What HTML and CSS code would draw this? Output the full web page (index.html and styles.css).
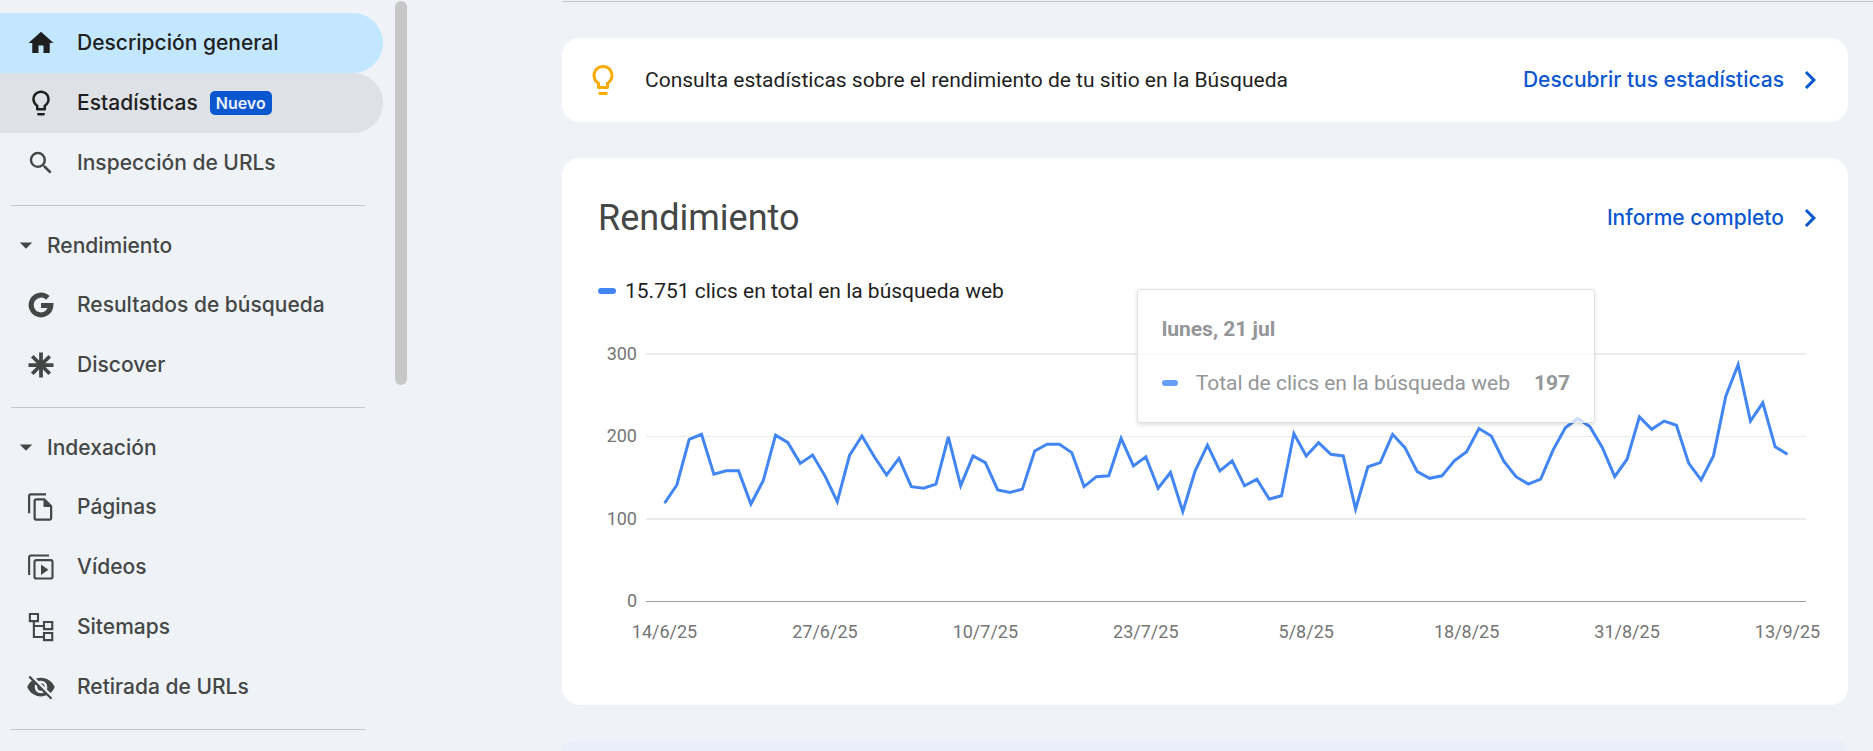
FILE: index.html
```html
<!DOCTYPE html>
<html lang="es">

<head>
    <meta charset="UTF-8">
    <meta name="viewport" content="width=device-width, initial-scale=1.0">
    <title>Descripción general</title>
    <link rel="stylesheet" href="styles.css">
</head>
<body>
    <div class="sidebar">
        <nav class="menu">
            <a class="item active" href="#">
                <svg class="icon" viewBox="0 0 24 24"><path d="M10 20v-6h4v6h5v-8h3L12 3 2 12h3v8z"/></svg>
                Descripción general
            </a>
            <a class="item hover" href="#">
                <svg class="icon" viewBox="0 0 24 24"><path d="M9 21c0 .55.45 1 1 1h4c.55 0 1-.45 1-1v-1H9v1zm3-19C8.14 2 5 5.14 5 9c0 2.38 1.19 4.47 3 5.74V17c0 .55.45 1 1 1h6c.55 0 1-.45 1-1v-2.26c1.81-1.27 3-3.36 3-5.74 0-3.86-3.14-7-7-7zm2.85 11.1l-.85.6V16h-4v-2.3l-.85-.6A4.997 4.997 0 0 1 7 9c0-2.76 2.24-5 5-5s5 2.24 5 5c0 1.63-.8 3.16-2.15 4.1z"/></svg>
                Estadísticas
                <span class="badge">Nuevo</span>
            </a>
            <a class="item" href="#">
                <svg class="icon" viewBox="0 0 24 24"><path d="M15.5 14h-.79l-.28-.27A6.471 6.471 0 0 0 16 9.5 6.5 6.5 0 1 0 9.5 16c1.61 0 3.09-.59 4.23-1.57l.27.28v.79l5 4.99L20.49 19l-4.99-5zm-6 0C7.01 14 5 11.99 5 9.5S7.01 5 9.5 5 14 7.01 14 9.5 11.99 14 9.5 14z"/></svg>
                Inspección de URLs
            </a>
            <hr class="divider">
            <button class="section" type="button">
                <svg class="icon" viewBox="0 0 24 24"><path d="M7 10l5 5 5-5z"/></svg>
                Rendimiento
            </button>
            <a class="item" href="#">
                <svg class="icon" viewBox="0 0 24 24"><path d="M17.5 6.3A7.9 7.9 0 1 0 19.9 12.3H12" fill="none" stroke="currentColor" stroke-width="4"/></svg>
                Resultados de búsqueda
            </a>
            <a class="item" href="#">
                <svg class="icon" viewBox="0 0 24 24"><path d="M12 2v20M2 12h20M5 5l14 14M19 5L5 19" fill="none" stroke="currentColor" stroke-width="3"/></svg>
                Discover
            </a>
            <hr class="divider">
            <button class="section" type="button">
                <svg class="icon" viewBox="0 0 24 24"><path d="M7 10l5 5 5-5z"/></svg>
                Indexación
            </button>
            <a class="item" href="#">
                <svg class="icon" viewBox="0 0 24 24"><path d="M16 1H3.600c-1.100 0-2 .9-2 2v14h1.800V2.800H16V1zM15 5H8c-1.100 0-1.990.9-1.990 2L6 21c0 1.100.89 2 1.990 2H19c1.100 0 2-.9 2-2V11l-6-6zM7.800 21.200V6.800H14V12h5.200v9.200z"/></svg>
                Páginas
            </a>
            <a class="item" href="#">
                <svg class="icon" viewBox="0 0 24 24"><path d="M2.500 18.400V4.300q0-1.500 1.500-1.500h14.400M8.300 6.500h11.400q1.500 0 1.500 1.500v11.700q0 1.500-1.500 1.500H8.300q-1.500 0-1.500-1.500V8q0-1.500 1.500-1.500z" fill="none" stroke="currentColor" stroke-width="1.700"/><path d="M12 9.900v8.400l6-4.200z"/></svg>
                Vídeos
            </a>
            <a class="item" href="#">
                <svg class="icon" viewBox="0 0 24 24"><path d="M3.100 1.600h6.500v5.700H3.100zM14.400 8h6.600v5.700h-6.600zM14.400 16.800h6.600v5.700h-6.600zM6.300 7.300V20h8.100M6.300 11.200h8.100" fill="none" stroke="currentColor" stroke-width="1.700"/></svg>
                Sitemaps
            </a>
            <a class="item" href="#">
                <svg class="icon" viewBox="0 0 24 24"><path d="M12 7c2.760 0 5 2.240 5 5 0 .65-.13 1.260-.36 1.830l2.920 2.920c1.510-1.260 2.700-2.890 3.430-4.750-1.730-4.390-6-7.500-11-7.500-1.400 0-2.740.25-3.980.7l2.160 2.160C10.740 7.130 11.350 7 12 7zM2 4.270l2.280 2.280.46.46C3.080 8.300 1.780 10.020 1 12c1.730 4.390 6 7.500 11 7.500 1.550 0 3.030-.3 4.380-.84l.42.42L19.730 22 21 20.730 3.270 3 2 4.270zM7.530 9.800l1.550 1.550c-.05.21-.08.43-.08.65 0 1.660 1.340 3 3 3 .22 0 .44-.03.65-.08l1.550 1.550c-.67.33-1.410.53-2.200.53-2.760 0-5-2.240-5-5 0-.79.2-1.530.53-2.200zm4.310-.78l3.150 3.150.02-.16c0-1.660-1.340-3-3-3l-.17.01z"/></svg>
                Retirada de URLs
            </a>
            <hr class="divider">
        </nav>
        <div class="scroll-thumb"></div>
    </div>

    <main class="main">
        <div class="card tip">
            <svg class="icon-big bulb" viewBox="0 0 24 24"><path d="M9 21c0 .55.45 1 1 1h4c.55 0 1-.45 1-1v-1H9v1zm3-19C8.14 2 5 5.14 5 9c0 2.38 1.19 4.47 3 5.74V17c0 .55.45 1 1 1h6c.55 0 1-.45 1-1v-2.26c1.81-1.27 3-3.36 3-5.74 0-3.86-3.14-7-7-7zm2.85 11.1l-.85.6V16h-4v-2.3l-.85-.6A4.997 4.997 0 0 1 7 9c0-2.76 2.24-5 5-5s5 2.24 5 5c0 1.63-.8 3.16-2.15 4.1z"/></svg>
            <span class="tip-text">Consulta estadísticas sobre el rendimiento de tu sitio en la Búsqueda</span>
            <a class="more" href="#">
                Descubrir tus estadísticas
                <svg class="icon-big" viewBox="0 0 24 24"><path d="M10 6L8.590 7.410 13.170 12l-4.580 4.590L10 18l6-6z"/></svg>
            </a>
        </div>

        <section class="card performance">
            <div class="card-header">
                <h1 class="title">Rendimiento</h1>
                <a class="more" href="#">
                    Informe completo
                    <svg class="icon-big" viewBox="0 0 24 24"><path d="M10 6L8.590 7.410 13.170 12l-4.580 4.590L10 18l6-6z"/></svg>
                </a>
            </div>
            <div class="legend">
                <span class="marker"></span>
                15.751 clics en total en la búsqueda web
            </div>
            <div class="chart">
                <div class="y-axis">
                    <span>300</span>
                    <span>200</span>
                    <span>100</span>
                    <span>0</span>
                </div>
                <div class="plot">
                    <div class="grid-lines">
                        <div></div>
                        <div></div>
                        <div></div>
                        <div></div>
                    </div>
                    <svg class="line" viewBox="0 0 94 300" preserveAspectRatio="none">
                        <polyline id="clicks" points=""/>
                    </svg>
                    <div class="tooltip">
                        <div class="tooltip-date">lunes, 21 jul</div>
                        <div class="tooltip-row">
                            <span class="marker"></span>
                            <span class="tooltip-label">Total de clics en la búsqueda web</span>
                            <b>197</b>
                        </div>
                    </div>
                </div>
                <div class="x-axis">
                    <div class="x-labels">
                        <span>14/6/25</span>
                        <span>27/6/25</span>
                        <span>10/7/25</span>
                        <span>23/7/25</span>
                        <span>5/8/25</span>
                        <span>18/8/25</span>
                        <span>31/8/25</span>
                        <span>13/9/25</span>
                    </div>
                </div>
            </div>
        </section>

        <section class="next-card"></section>
    </main>

    <script>
        // clics por día, del 14/6/25 al 13/9/25
        var clicks = [
            119, 141, 196, 202, 154, 158, 158, 118, 146, 201, 192, 167, 177,
            152, 121, 177, 200, 175, 153, 173, 139, 137, 142, 199, 140, 176,
            168, 135, 132, 136, 182, 190, 190, 180, 139, 151, 152, 197, 164,
            175, 137, 156, 109, 158, 189, 158, 170, 140, 148, 124, 128, 203,
            176, 192, 178, 176, 112, 163, 168, 202, 186, 157, 149, 152, 170,
            181, 209, 200, 170, 151, 142, 148, 183, 210, 221, 211, 186, 151,
            172, 223, 208, 218, 213, 167, 147, 176, 248, 286, 218, 240, 187,
            178
        ];
        var points = '';
        for (var i = 0; i < clicks.length; i++) {
            points += (i + 1.5) + ',' + (300 - clicks[i]) + ' ';
        }
        document.getElementById('clicks').setAttribute('points', points);
    </script>
</body>

</html>
```

FILE: styles.css
```css
* {
    box-sizing: border-box;
}

body {
    margin: 0;
    height: 100vh;
    display: flex;
    overflow: hidden;
    background-color: #eff3f8;
    color: #1f1f1f;
    font-family: Roboto, Arial, sans-serif;
    font-size: 21px;
    line-height: 30px;
}

a {
    text-decoration: none;
}

.icon {
    width: 30px;
    height: 30px;
    flex: none;
    fill: currentColor;
}

.icon-big {
    width: 36px;
    height: 36px;
    flex: none;
    fill: currentColor;
}

/* sidebar */
.sidebar {
    width: 410px;
    flex: none;
    display: flex;
    gap: 12px;
}

.menu {
    width: 383px;
    padding-top: 13px;
}

.item {
    display: flex;
    align-items: center;
    height: 60px;
    padding-left: 26px;
    border-radius: 0 30px 30px 0;
    color: #444746;
}

.item .icon {
    margin-right: 21px;
}

.item.active {
    background-color: #c2e7ff;
    color: #1f1f1f;
}

.item.hover {
    background-color: #dee1e6;
    color: #1f1f1f;
}

.item, .section, .more {
    font-family: Inter, Roboto, sans-serif;
    font-size: 21px;
    font-weight: 500;
}

.badge {
    margin-left: 12px;
    padding: 0 6px;
    border-radius: 5px;
    background-color: #0b57d0;
    color: #edf2fa;
    font-size: 16px;
    font-weight: 600;
    line-height: 24px;
}

.section {
    display: flex;
    align-items: center;
    gap: 6px;
    width: 100%;
    height: 60px;
    padding: 0 0 0 11px;
    border: none;
    background: none;
    color: #444746;
    cursor: pointer;
}

.divider {
    height: 1px;
    margin: 12px 18px 9px 11px;
    border: none;
    background-color: #c4c7c5;
}

.scroll-thumb {
    width: 12px;
    height: 384px;
    margin-top: 1px;
    border-radius: 6px;
    background-color: #c7c7c7;
}

/* main column */
.main {
    flex: 1;
    min-width: 0;
    margin: 1px 0 0 152px;
    border-top: 1px solid #c4c7c5;
    padding: 36px 25px 0 0;
    display: flex;
    flex-direction: column;
    gap: 36px;
}

.card {
    flex: none;
    border-radius: 18px;
    background-color: #fff;
}

.tip {
    display: flex;
    align-items: center;
    gap: 24px;
    padding: 24px 20px 24px 23px;
}

.bulb {
    color: #f9ab00;
}

.tip-text {
    flex: 1;
}

.more {
    display: flex;
    align-items: center;
    gap: 8px;
    color: #0b57d0;
}

.performance {
    padding: 36px 0 58px 36px;
}

.card-header {
    display: flex;
    align-items: center;
    justify-content: space-between;
    height: 48px;
    padding-right: 20px;
}

.title {
    margin: 0;
    color: #444746;
    font-size: 36px;
    font-weight: 400;
}

.legend {
    display: flex;
    align-items: center;
    gap: 9px;
    margin-top: 34px;
}

.marker {
    width: 18px;
    height: 6px;
    flex: none;
    border-radius: 3px;
    background-color: #4285f4;
}

/* chart */
.chart {
    display: grid;
    grid-template-columns: 39px 1fr;
    column-gap: 9px;
    margin: 47px 42px 0 0;
    color: #757575;
    font-size: 18px;
}

.y-axis {
    display: flex;
    flex-direction: column;
    justify-content: space-between;
    margin: -14px 0 -14px;
    text-align: right;
}

.plot {
    position: relative;
    height: 249px;
}

.grid-lines {
    display: flex;
    flex-direction: column;
    justify-content: space-between;
    height: 100%;
}

.grid-lines div {
    height: 2px;
    background-color: #ebebeb;
}

.grid-lines div:nth-child(2) {
    height: 1px;
}

.grid-lines div:last-child {
    height: 1px;
    background-color: #9e9e9e;
}

.line {
    position: absolute;
    left: 0;
    top: 0;
    width: 100%;
    height: 100%;
}

.line polyline {
    fill: none;
    stroke: #4285f4;
    stroke-width: 3px;
    vector-effect: non-scaling-stroke;
}

.x-axis {
    grid-column: 2;
    margin-top: 15px;
}

/* each label covers 13 days, centered on its own day */
.x-labels {
    display: grid;
    grid-template-columns: repeat(8, 1fr);
    margin: 0 -5.32%;
    text-align: center;
}

.tooltip {
    position: absolute;
    left: 42.3%;
    top: -64px;
    padding: 24px;
    border: 1px solid #e0e0e0;
    border-radius: 3px;
    background-color: rgba(255, 255, 255, 0.72);
    box-shadow: 0 2px 4px rgba(0, 0, 0, 0.12);
    color: #949698;
    font-size: 21px;
    white-space: nowrap;
}

.tooltip-date {
    font-weight: 700;
}

.tooltip-row {
    display: flex;
    align-items: center;
    margin-top: 24px;
}

.tooltip-row .marker {
    width: 16px;
    background-color: #669df6;
}

.tooltip-label {
    margin: 0 24px 0 18px;
}

.next-card {
    flex: 1;
    border-radius: 18px 18px 0 0;
    background-color: #e9eef8;
}
```
